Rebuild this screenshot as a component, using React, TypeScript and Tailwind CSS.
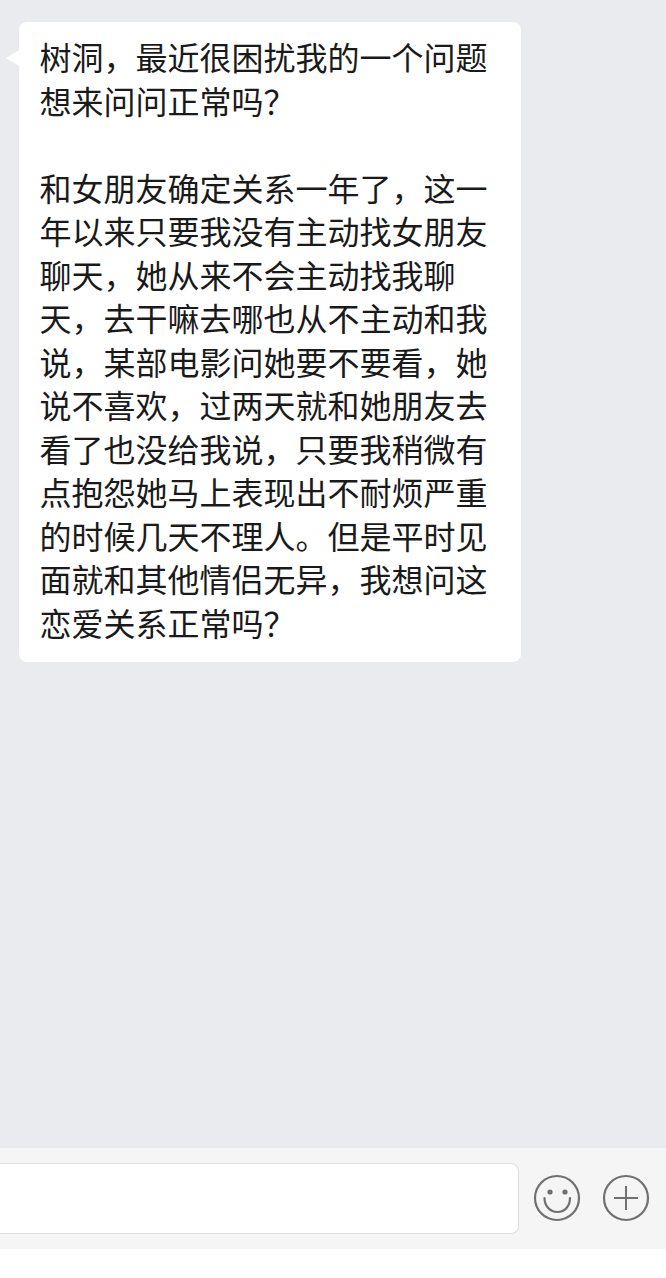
const lines = [
  "树洞，最近很困扰我的一个问题",
  "想来问问正常吗？",
  "",
  "和女朋友确定关系一年了，这一",
  "年以来只要我没有主动找女朋友",
  "聊天，她从来不会主动找我聊",
  "天，去干嘛去哪也从不主动和我",
  "说，某部电影问她要不要看，她",
  "说不喜欢，过两天就和她朋友去",
  "看了也没给我说，只要我稍微有",
  "点抱怨她马上表现出不耐烦严重",
  "的时候几天不理人。但是平时见",
  "面就和其他情侣无异，我想问这",
  "恋爱关系正常吗？",
];

export default function App() {
  return (
    <div className="w-[666px] h-[1278px] bg-[#eaebef] flex flex-col overflow-hidden font-['Noto_Sans_CJK_SC',sans-serif]">
      <div className="flex-1 pt-[22px] pl-[19px]">
        {/* message bubble with its tail on the left edge */}
        <div className="relative w-[502px] h-[640px] bg-white rounded-[8px] pl-[20.5px] pt-[13px]">
          <div className="absolute left-[-13px] top-[28px] w-0 h-0 border-y-[8px] border-y-transparent border-r-[13px] border-r-white" />
          {lines.map((line, i) => (
            <div key={i} className="h-[43.5px] leading-[43.5px] text-[32px] text-[#1a1a1a] whitespace-nowrap">{line}</div>
          ))}
        </div>
      </div>
      {/* input toolbar */}
      <div className="bg-white pb-[29px]">
        <div className="h-[101px] bg-[#f5f5f5] flex items-start pt-[15px]">
          <div className="w-[519px] h-[71px] bg-white border-[1.5px] border-[#dedede] border-l-0 rounded-r-[8px]" />
          <svg className="ml-[13px] mt-[10px]" width="50" height="50" viewBox="0 0 50 50" fill="none" stroke="#707070" strokeWidth="2.2">
            <circle cx="25" cy="25" r="22" />
            <circle cx="18" cy="19" r="2.6" fill="#707070" stroke="none" />
            <circle cx="33" cy="19" r="2.6" fill="#707070" stroke="none" />
            <path d="M12.500 25c0 8 5.500 14 13 14s12.500-6 12.500-14" strokeLinecap="round" />
          </svg>
          <svg className="ml-[19px] mt-[10px]" width="50" height="50" viewBox="0 0 50 50" fill="none" stroke="#707070" strokeWidth="2.2">
            <circle cx="25" cy="25" r="22" />
            <path d="M13 25h24M25 13v24" strokeWidth="2" />
          </svg>
        </div>
      </div>
    </div>
  );
}
